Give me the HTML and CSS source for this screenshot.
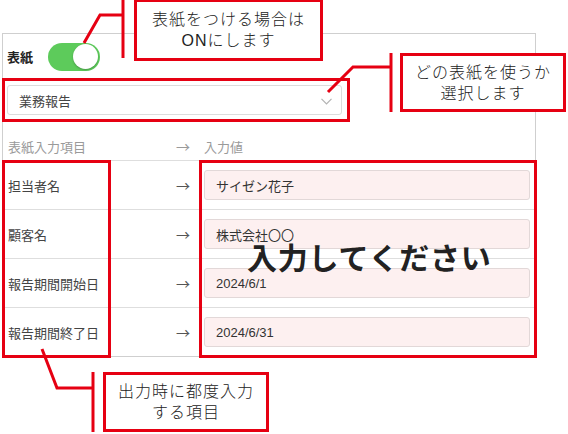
FILE: index.html
```html
<!DOCTYPE html>
<html lang="ja">
<head>
<meta charset="utf-8">
<title>表紙設定</title>
<link rel="stylesheet" href="styles.css">
</head>
<body>
<div class="page">
  <section class="panel">
    <div class="cover-row">
      <span class="cover-label">表紙</span>
      <span class="toggle"><span class="knob"></span></span>
    </div>
    <div class="select-row">
      <div class="select">
        <span>業務報告</span>
        <svg class="chev" width="11" height="7" viewBox="0 0 11 7"><polyline points="0.5,0.8 5.5,5.8 10.5,0.8" fill="none" stroke="#b3b3b3" stroke-width="1.2"/></svg>
      </div>
    </div>
    <div class="table">
      <div class="row head">
        <span class="label">表紙入力項目</span>
        <span class="arrow">→</span>
        <span class="value-head">入力値</span>
      </div>
      <div class="row">
        <span class="label">担当者名</span>
        <span class="arrow">→</span>
        <div class="cell"><div class="input">サイゼン花子</div></div>
      </div>
      <div class="row">
        <span class="label">顧客名</span>
        <span class="arrow">→</span>
        <div class="cell"><div class="input">株式会社〇〇</div></div>
      </div>
      <div class="row">
        <span class="label">報告期間開始日</span>
        <span class="arrow">→</span>
        <div class="cell"><div class="input">2024/6/1</div></div>
      </div>
      <div class="row">
        <span class="label">報告期間終了日</span>
        <span class="arrow">→</span>
        <div class="cell"><div class="input">2024/6/31</div></div>
      </div>
    </div>
  </section>

  <div class="hl hl-select"></div>
  <div class="hl hl-labels"></div>
  <div class="hl hl-values"></div>

  <div class="big-note">入力してください</div>

  <svg class="leaders" width="568" height="434" viewBox="0 0 568 434">
    <g fill="none" stroke="#e60012" stroke-width="3">
      <line x1="123" y1="0" x2="123" y2="58"/>
      <polyline points="84,43 100,15 123,15"/>
      <line x1="391" y1="53" x2="391" y2="112"/>
      <polyline points="328,92 353,67 391,67"/>
      <line x1="93" y1="372" x2="93" y2="432"/>
      <polyline points="42,349 57,388 93,388"/>
    </g>
  </svg>

  <div class="callout callout-on">表紙をつける場合は<br>ONにします</div>
  <div class="callout callout-select">どの表紙を使うか<br>選択します</div>
  <div class="callout callout-items">出力時に都度入力<br>する項目</div>
</div>
</body>
</html>
```

FILE: styles.css
```css
* { box-sizing: border-box; }
html, body { margin: 0; padding: 0; background: #fff; }
body {
  font-family: "Liberation Sans", "Noto Sans CJK JP", sans-serif;
  color: #333;
  width: 568px;
  height: 434px;
  overflow: hidden;
}
.page {
  position: relative;
  width: 568px;
  height: 434px;
  padding-top: 33px;
  padding-left: 2px;
}
.panel {
  width: 534px;
  border: 1px solid #cfcfcf;
  background: #fff;
}
.cover-row {
  height: 45px;
  display: flex;
  align-items: center;
  padding-left: 4px;
  gap: 15px;
}
.cover-label {
  font-size: 13px;
  font-weight: 700;
  color: #222;
}
.toggle {
  position: relative;
  width: 52px;
  height: 28px;
  border-radius: 14px;
  background: #5dcb5b;
  display: flex;
  align-items: center;
  justify-content: flex-end;
  padding-right: 2px;
}
.knob {
  width: 25px;
  height: 25px;
  border-radius: 50%;
  background: #fff;
  box-shadow: 0 1px 2px rgba(0,0,0,0.25);
}
.select-row {
  height: 42px;
  padding: 6px 0 0 4px;
}
.select {
  width: 335px;
  height: 30px;
  border: 1px solid #dcdcdc;
  border-radius: 3px;
  display: flex;
  align-items: center;
  justify-content: space-between;
  padding: 0 9px 0 11px;
  font-size: 13px;
  color: #444;
}
.chev { display: block; margin-top: 2px; }
.table { display: flex; flex-direction: column; }
.row {
  display: grid;
  grid-template-columns: 166px 28px 1fr;
  align-items: center;
  height: 49px;
  border-top: 1px solid #dedede;
  font-size: 13px;
}
.row.head {
  height: 39px;
  border-top: none;
  padding-top: 11px;
  color: #9a9a9a;
}
.label { padding-left: 5px; color: #444; white-space: nowrap; }
.row.head .label { color: #9a9a9a; }
.arrow {
  text-align: center;
  color: #555;
  font-size: 14px;
  font-family: "Noto Sans CJK JP", sans-serif;
}
.row.head .arrow { color: #9a9a9a; }
.value-head { padding-left: 7px; }
.cell { padding: 0 5px 0 7px; }
.input {
  height: 30px;
  border: 1px solid #e2d8d8;
  border-radius: 3px;
  background: #fdf0f0;
  display: flex;
  align-items: center;
  padding-left: 11px;
  color: #333;
  font-size: 13px;
}

.hl {
  position: absolute;
  border: 3px solid #e60012;
}
.hl-select { left: 2px; top: 78px; width: 348px; height: 44px; }
.hl-labels { left: 2px; top: 160px; width: 109px; height: 198px; }
.hl-values { left: 199px; top: 160px; width: 338px; height: 198px; }

.big-note {
  position: absolute;
  left: 247px;
  top: 240px;
  font-family: "Noto Sans CJK JP", sans-serif;
  font-size: 30px;
  line-height: 32px;
  font-weight: 700;
  letter-spacing: 0.8px;
  color: #222;
  white-space: nowrap;
}

.leaders { position: absolute; left: 0; top: 0; }

.callout {
  position: absolute;
  border: 3px solid #e60012;
  background: #fff;
  display: flex;
  align-items: center;
  justify-content: center;
  text-align: center;
  font-size: 16px;
  font-weight: 300;
  line-height: 21px;
  letter-spacing: 1px;
  color: #222;
}
.callout-on { left: 134px; top: -1px; width: 189px; height: 62px; }
.callout-select { left: 400px; top: 53px; width: 166px; height: 59px; }
.callout-items { left: 103px; top: 372px; width: 166px; height: 60px; }
```
